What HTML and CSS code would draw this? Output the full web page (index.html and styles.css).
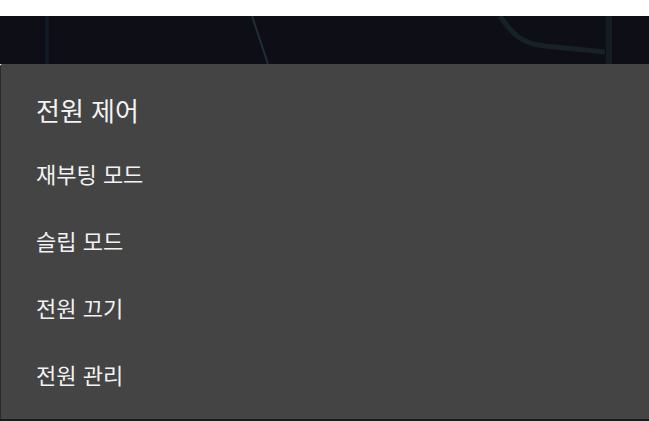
FILE: index.html
```html
<!DOCTYPE html>
<html lang="ko">
<head>
<meta charset="utf-8">
<link rel="stylesheet" href="styles.css">
</head>
<body>
<div class="topbar"></div>
<div class="wallpaper">
  <svg width="649" height="48" viewBox="0 0 649 48">
    <rect width="649" height="48" fill="#0e0e16"/>
    <line x1="47" y1="0" x2="47" y2="48" stroke="#121c28" stroke-width="3"/>
    <line x1="252" y1="0" x2="268" y2="48" stroke="#1d2e38" stroke-width="2"/>
    <path d="M500 0 C 512 18, 522 28, 545 30 L 605 36" fill="none" stroke="#172224" stroke-width="5"/>
    <line x1="609" y1="0" x2="609" y2="48" stroke="#141e22" stroke-width="6"/>
  </svg>
</div>
<div class="panel">
  <div class="title">전원 제어</div>
  <ul class="menu">
    <li>재부팅 모드</li>
    <li>슬립 모드</li>
    <li>전원 끄기</li>
    <li>전원 관리</li>
  </ul>
</div>
<div class="bottom"></div>
</body>
</html>
```

FILE: styles.css
```css
html, body {
  margin: 0;
  padding: 0;
  background: #ffffff;
  font-family: "Noto Sans CJK KR", "Noto Sans", sans-serif;
}
.topbar {
  height: 16px;
  background: #ffffff;
}
.wallpaper {
  height: 48px;
  overflow: hidden;
}
.wallpaper svg {
  display: block;
}
.panel {
  height: 355px;
  box-sizing: border-box;
  background: #444444;
  border-left: 1px solid #2a2a2a;
  border-top-left-radius: 3px;
  padding: 26px 0 0 35px;
  color: #f2f2f2;
}
.title {
  font-size: 26px;
  line-height: 40px;
  height: 50px;
}
.menu {
  list-style: none;
  margin: 0;
  padding: 0;
  display: flex;
  flex-direction: column;
}
.menu li {
  font-size: 22px;
  line-height: 67px;
  height: 67px;
}
.bottom {
  height: 2px;
  background: #1a1a1a;
}
```
